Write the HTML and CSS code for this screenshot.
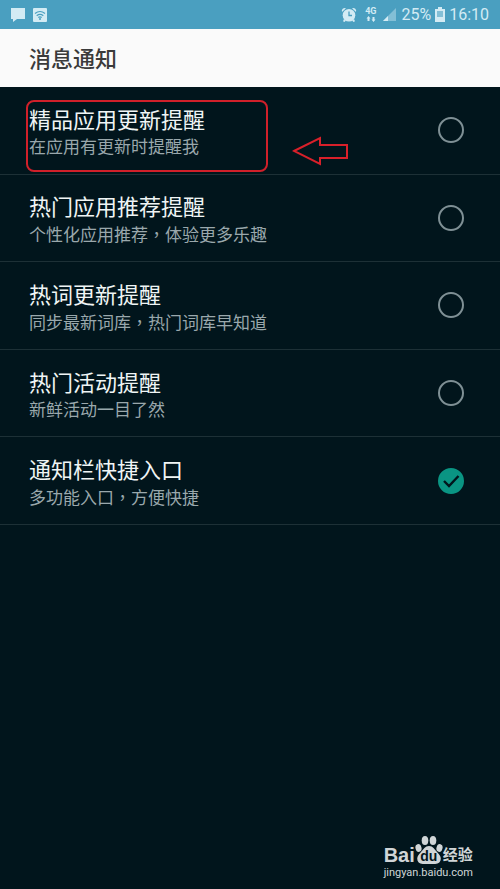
FILE: index.html
```html
<!DOCTYPE html>
<html lang="zh-CN">
<head>
<meta charset="utf-8">
<meta name="viewport" content="width=device-width, initial-scale=1">
<title>消息通知</title>
<link rel="stylesheet" href="styles.css">
</head>
<body>
<div class="status">
  <div class="status-group">
    <svg width="16" height="16" viewBox="0 0 16 16" aria-hidden="true"><path fill="#d3ebf4" d="M1 1h14v11H7l-4 3v-3H1z"/></svg>
    <svg width="16" height="16" viewBox="0 0 16 16" aria-hidden="true"><rect x="1" y="1" width="14" height="14" rx="1" fill="#d3ebf4"/><g fill="none" stroke="#4a9fc0" stroke-width="1.2"><path d="M3 6.500q5-4 10 0M4.700 8.700q3.300-2.600 6.600 0M6.300 10.600q1.700-1.300 3.400 0"/></g><circle cx="8" cy="12" r="1" fill="#4a9fc0"/></svg>
  </div>
  <div class="status-group status-right">
    <svg class="alarm" width="16" height="16" viewBox="0 0 16 16" aria-hidden="true"><g fill="#d3ebf4"><circle cx="8" cy="8.200" r="6.300"/><path d="M1 5a3 3 0 0 1 4-3.800zM15 5a3 3 0 0 0-4-3.800zM3 12l2 1.500L3.500 15 2 14.300zM13 12l-2 1.500 1.500 1.500 1.500-.7z"/></g><path d="M8 4.500v4h3" fill="none" stroke="#4a9fc0" stroke-width="1.300"/></svg>
    <div class="network"><span>4G</span><svg width="10" height="6" viewBox="0 0 10 6" aria-hidden="true"><path fill="#d3ebf4" d="M2.500 0l2 2.500h-1V5h-2V2.500h-1zM7.500 6l2-2.500h-1V1h-2v2.500h-1z"/></svg></div>
    <svg width="15" height="15" viewBox="0 0 15 15" aria-hidden="true"><path fill="#83bfd6" d="M14 1v13H1z"/><path fill="#d3ebf4" d="M6 9v5H1z"/></svg>
    <span>25%</span>
    <svg width="10" height="15" viewBox="0 0 10 15" aria-hidden="true"><path fill="#d3ebf4" d="M3 0h4v2h3v13H0V2h3z"/><path d="M2 4h6v6H2z" fill="#83bfd6"/></svg>
    <span>16:10</span>
  </div>
</div>
<header class="header"><h1>消息通知</h1></header>
<main>
  <ul class="list">
    <li>
      <label class="row">
        <span class="text"><span class="name">精品应用更新提醒</span><span class="note">在应用有更新时提醒我</span></span>
        <input type="checkbox">
      </label>
      <span class="highlight"></span>
      <svg class="arrow" width="58" height="30" viewBox="0 0 58 30" aria-hidden="true"><path d="M2 15L28 2v7h27v13H28v6z" fill="none" stroke="#d8202a" stroke-width="2"/></svg>
    </li>
    <li>
      <label class="row">
        <span class="text"><span class="name">热门应用推荐提醒</span><span class="note">个性化应用推荐<span class="comma" lang="zh-TW">，</span>体验更多乐趣</span></span>
        <input type="checkbox">
      </label>
    </li>
    <li>
      <label class="row">
        <span class="text"><span class="name">热词更新提醒</span><span class="note">同步最新词库<span class="comma" lang="zh-TW">，</span>热门词库早知道</span></span>
        <input type="checkbox">
      </label>
    </li>
    <li>
      <label class="row">
        <span class="text"><span class="name">热门活动提醒</span><span class="note">新鲜活动一目了然</span></span>
        <input type="checkbox">
      </label>
    </li>
    <li>
      <label class="row">
        <span class="text"><span class="name">通知栏快捷入口</span><span class="note">多功能入口<span class="comma" lang="zh-TW">，</span>方便快捷</span></span>
        <span class="check"><input type="checkbox" checked><svg width="26" height="26" viewBox="0 0 26 26" aria-hidden="true"><path d="M6 13l5 5L20.500 8" fill="none" stroke="#01151c" stroke-width="2.400"/></svg></span>
      </label>
    </li>
  </ul>
</main>
<footer class="brand">
  <div class="logo">
    <span>Bai</span>
    <span class="paw"><svg width="28" height="30" viewBox="0 0 28 30" aria-hidden="true"><g fill="#d0d5d7"><ellipse cx="3.500" cy="13" rx="3" ry="4" transform="rotate(-15 3.500 13)"/><ellipse cx="10" cy="5.500" rx="3.300" ry="4.500"/><ellipse cx="18" cy="5.500" rx="3.300" ry="4.500"/><ellipse cx="24.500" cy="13" rx="3" ry="4" transform="rotate(15 24.500 13)"/><path d="M14 11c4 0 5.500 3.500 8 6 3 3 4.500 5.500 3.500 8.500-1.500 4-5.500 3.500-11.500 3.500S4 29.500 2.500 25.500c-1-3 .5-5.500 3.500-8.500 2.500-2.500 4-6 8-6z"/></g></svg><span class="du">du</span></span>
    <span class="jingyan">经验</span>
  </div>
  <div class="domain">jingyan.baidu.com</div>
</footer>
</body>
</html>
```

FILE: styles.css
```css
* { box-sizing: border-box; }

body {
  margin: 0;
  min-height: 100vh;
  display: flex;
  flex-direction: column;
  background: #01151c;
  color: #f0f5f5;
  font-family: Roboto, "Noto Sans CJK SC", sans-serif;
}

.status {
  display: flex;
  justify-content: space-between;
  align-items: center;
  height: 29px;
  padding: 0 11px 0 10px;
  background: #4a9fc0;
  color: #d3ebf4;
  font-size: 16px;
}

.status-group {
  display: flex;
  align-items: center;
  gap: 6px;
}

.status-right { gap: 4px; }

.network {
  display: flex;
  flex-direction: column;
  align-items: center;
  margin: 0 2px 0 4px;
  font-size: 9px;
  font-weight: 700;
  line-height: 9px;
}

.header {
  display: flex;
  align-items: center;
  height: 58px;
  padding: 4px 29px 0;
  background: #fafafa;
  color: #3b3b3b;
}

h1 {
  margin: 0;
  font-size: 22px;
  font-weight: 500;
  line-height: 32px;
}

.list {
  display: grid;
  grid-auto-rows: 1fr;
  min-height: 438px;
  margin: 0;
  padding: 0;
  list-style: none;
}

.list li {
  position: relative;
  border-bottom: 1px solid #1d3036;
}

.row {
  display: flex;
  justify-content: space-between;
  align-items: center;
  height: 100%;
  padding: 0 36px 0 29px;
}

.text {
  display: flex;
  flex-direction: column;
  padding-top: 6px;
}

.name {
  font-size: 22px;
  line-height: 28px;
}

.note {
  color: #9aa8ac;
  font-size: 17px;
  line-height: 24px;
}

.comma { font-family: "Noto Sans CJK TC", sans-serif; }

input {
  appearance: none;
  display: block;
  width: 26px;
  height: 26px;
  margin: 0;
  border: 2px solid #7f9095;
  border-radius: 50%;
}

input:checked {
  border-color: #0a9583;
  background: #0a9583;
}

.check { position: relative; }

.check svg {
  position: absolute;
  inset: 0;
}

.highlight {
  position: absolute;
  top: 13px;
  left: 26px;
  width: 242px;
  height: 72px;
  border: 2px solid #d0202a;
  border-radius: 8px;
  pointer-events: none;
}

.arrow {
  position: absolute;
  top: 49px;
  left: 292px;
}

.brand {
  align-self: flex-end;
  margin-top: auto;
  padding: 0 27px 9px 0;
  color: #d0d5d7;
}

.logo {
  display: flex;
  align-items: flex-end;
  font-family: "Liberation Sans", "Noto Sans CJK SC", sans-serif;
  font-size: 20px;
  font-weight: 700;
  line-height: 20px;
}

.paw {
  position: relative;
  display: flex;
}

.du {
  position: absolute;
  inset: auto 0 0;
  color: #01151c;
  font-size: 14px;
  line-height: 17px;
  text-align: center;
}

.jingyan {
  font-size: 15px;
  font-weight: 700;
}

.domain {
  font-size: 11px;
  line-height: 15px;
}
```
